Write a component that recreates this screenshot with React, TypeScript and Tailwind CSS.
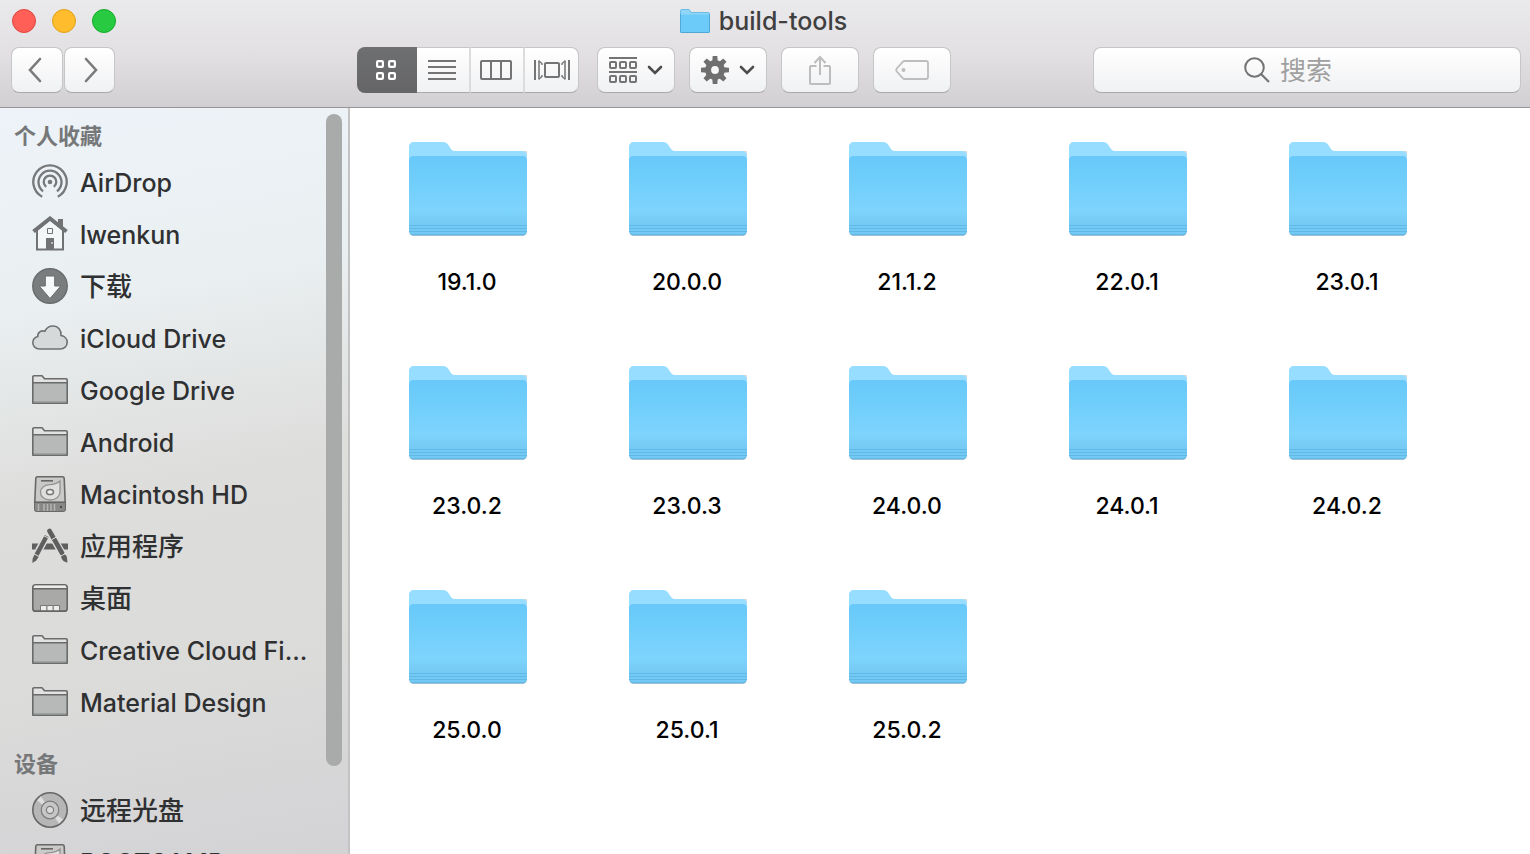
import React from "react";

type IconProps = { className?: string };

/* ---------- Folder artwork ---------- */

function FolderArt({ className }: IconProps) {
  return (
    <svg viewBox="0 0 120 96" className={className} aria-hidden="true">
      <defs>
        <linearGradient id="folderFront" x1="0" y1="0" x2="0" y2="1">
          <stop offset="0" stopColor="#68c8f9" />
          <stop offset="0.15" stopColor="#6bcbfa" />
          <stop offset="0.68" stopColor="#7dd4fd" />
          <stop offset="0.84" stopColor="#75cbf4" />
          <stop offset="1" stopColor="#72c9f3" />
        </linearGradient>
      </defs>
      <path d="M1 88V10h118v80c0 3-2 5-5 5H6c-3 0-5-2-5-7Z" fill="#000" opacity="0.14" />
      <path d="M1 90V6c0-3 2-5 5-5h29c3 0 4 1 6 4l2 3c1 1 2 2 4 2h67c3 0 5 2 5 5v75c0 2-2 4-4 4H5c-2 0-4-2-4-4Z" fill="#97ddff" />
      <path d="M1 90V19c0-2 2-4 4-4h110c2 0 4 2 4 4v71c0 2-2 4-4 4H5c-2 0-4-2-4-4Z" fill="url(#folderFront)" />
      <path d="M1 84.500h118M1 87.500h118M1 90.500h118" stroke="#5fb9e6" strokeWidth="1" />
      <path d="M2 92.500c1 1 2 1.500 3 1.500h110c1 0 2-.5 3-1.500" stroke="#58a8d0" strokeWidth="1" fill="none" />
    </svg>
  );
}

function TitleFolder() {
  return (
    <svg viewBox="0 0 32 26" className="h-[26px] w-8" aria-hidden="true">
      <path d="M1 23V3c0-1 .7-2 2-2h7l2.500 3H29c1.200 0 2 .8 2 2v17.500c0 .9-.6 1.500-1.500 1.500h-27C1.600 25 1 24.400 1 23.500Z" fill="#8fd6f8" />
      <path d="M1 23.500V6.500h30v17c0 .9-.6 1.500-1.500 1.500h-27C1.600 25 1 24.400 1 23.500Z" fill="#6ccbf9" />
      <path d="M1.500 6v17.500c0 .6.4 1 1 1h27c.6 0 1-.4 1-1V6" fill="none" stroke="#4fa8d6" strokeWidth="1" />
      <path d="M1.500 6V3c0-.9.500-1.500 1.500-1.500h6.800l2.400 3H29c.9 0 1.500.6 1.500 1.500" fill="none" stroke="#6bbbe4" strokeWidth="1" />
    </svg>
  );
}

/* ---------- Sidebar icons ---------- */

function AirDropIcon() {
  return (
    <g fill="none" stroke="#76787a" strokeWidth="2.300">
      <path d="M10.200 32.800A16.700 16.700 0 1 1 25.800 32.800" />
      <path d="M11 27.300A11.500 11.500 0 1 1 25 27.300" />
      <path d="M14.200 22.900A6.300 6.300 0 1 1 21.800 22.900" />
      <circle cx="18" cy="18" r="2.300" fill="#76787a" stroke="none" />
    </g>
  );
}

function HomeIcon() {
  return (
    <g>
      <path d="M26 3h5v10l-5-5Z" fill="#707274" />
      <path d="M5 14v19.500h26V14L18 3Z" fill="#f4f7f8" stroke="#707274" strokeWidth="2" />
      <path d="m1.500 15.500 16.500-13 16.500 13" fill="none" stroke="#707274" strokeWidth="4" />
      <path d="M15.500 12.500h5v5h-5Z" fill="none" stroke="#707274" strokeWidth="1" />
      <path d="M14 22h8v11h-8Z" fill="#707274" />
      <path d="M20 26v2" stroke="#fff" strokeWidth="1" />
    </g>
  );
}

function DownloadIcon() {
  return (
    <g>
      <circle cx="18" cy="18" r="17.200" fill="#7a7d7e" stroke="#6a6d6e" strokeWidth="1.500" />
      <path d="M13.300 8h9.400v10h6L18 30.500 7.300 18h6Z" fill="#f6f9fa" stroke="#6a6d6e" strokeWidth="1" />
    </g>
  );
}

function CloudIcon() {
  return (
    <path
      d="M7.500 29C3.500 29 .8 26.200.8 22.800c0-3 2-5.500 5-6.300-.5-3.800 3.500-6.700 7-5.200C14.300 8 17.500 6 21 6c5 0 8.500 4.200 8 9.500 3.500.5 6.200 3.300 6.200 6.800 0 3.800-3 6.700-7 6.700Z"
      fill="#d6d9da"
      stroke="#6f7173"
      strokeWidth="1.600"
    />
  );
}

function SmallFolderIcon() {
  return (
    <g strokeLinejoin="round">
      <path d="M.8 31V4.500L2 3.800h8.500l2.500 3h21.200l1 1V31Z" fill="#e1e2e1" />
      <path d="M.8 11h34.400v20H.8Z" fill="#b7b8b8" />
      <path d="M1 29.500h34" stroke="#a0a1a1" />
      <path d="M.8 10.800h34.400M.8 31.200V5c0-.7.5-1.200 1.200-1.200h8l2.500 3H34c.7 0 1.200.5 1.200 1.200v23.200Z" fill="none" stroke="#6a6b6b" strokeWidth="1.600" />
    </g>
  );
}

function HardDriveIcon() {
  return (
    <g>
      <path d="M5.500.8h25c1 0 1.600.6 1.700 1.600L33.200 26v7c0 1.300-1 2.200-2.200 2.200H5c-1.300 0-2.200-1-2.200-2.200v-7L3.800 2.400C3.900 1.400 4.500.8 5.500.8Z" fill="#c9cac8" stroke="#686967" strokeWidth="1.600" />
      <path d="M3 26.500h30V33c0 1-.8 2-2 2H5c-1.200 0-2-1-2-2Z" fill="#888987" />
      <path d="M3 26.200h30" stroke="#666765" strokeWidth="1.600" />
      <path d="M9 4.800h12" stroke="#666765" strokeWidth="1.600" />
      <path d="M28 5v11c0 4.500-4.500 8-10 8s-9.500-3.200-9.500-7.700S13 8.600 18 8.600c3.500 0 7-1.200 10-3.600Z" fill="#dfe0de" stroke="#92938f" strokeWidth="1.300" />
      <ellipse cx="18" cy="16" rx="3.500" ry="2.600" fill="#eee" stroke="#777876" strokeWidth="1.500" />
      <path d="M6.500 28v7M12 28v7M15.500 28v7M19 28v7M22.500 28v7" stroke="#b4b5b3" strokeWidth="1.500" />
      <path d="M28 30h2v2h-2Z" fill="#4d4e4c" />
    </g>
  );
}

function ApplicationsIcon() {
  return (
    <g fill="none" stroke="#5e5f5e">
      <path d="M0 18.500h36" strokeWidth="6" />
      <path d="M14.500 8 6.500 23M19 6l11.500 20" stroke="#dcdcdb" strokeWidth="7.500" />
      <path d="M14.700 8 4.500 27" strokeWidth="4.400" />
      <path d="m2.700 26-2 4.500L.3 35l3.900-2.500 2.900-4.200Z" fill="#5e5f5e" stroke="none" />
      <path d="M17.500 3 30 25" strokeWidth="4.600" strokeLinecap="round" />
      <path d="M29 27.500c2.500-2.500 6-.8 6 2.500l.5 4.500c-3.500-.3-6.300-3-6.500-7Z" fill="#5e5f5e" stroke="none" />
      <path d="m11.500 7.500 6 3.300M2 25.800l6 3.300M20 11.500l4.500-2.600M27 29.200l6.500-3.700" stroke="#dcdcdb" strokeWidth="1" />
    </g>
  );
}

function DesktopIcon() {
  return (
    <g>
      <rect x=".8" y="4.800" width="34.400" height="26.400" rx="2.800" fill="#a9aaa8" stroke="#666765" strokeWidth="1.600" />
      <path d="M2.500 5.600h31l1 2.400h-33Z" fill="#ececeb" />
      <path d="M1 8.800h34" stroke="#666765" strokeWidth="1.600" />
      <path d="M8.500 31v-5.500h19V31Z" fill="#ededec" stroke="#777876" strokeWidth="1" />
      <path d="M14.800 25.500V31M21.200 25.500V31" stroke="#8c8d8b" strokeWidth="1.500" />
      <path d="M2.500 31.200h31" stroke="#666765" strokeWidth="1.600" />
    </g>
  );
}

function DiscIcon() {
  return (
    <g>
      <circle cx="18" cy="18" r="17.200" fill="#b5b6b5" stroke="#666766" strokeWidth="1.600" />
      <path d="M18 18 5 8.500l4-4.200ZM18 18l13 9.500-4 4.200Z" fill="#dcdddc" />
      <circle cx="18" cy="18" r="8.800" fill="#c5c6c5" stroke="#7b7c7b" strokeWidth="1.200" />
      <circle cx="18" cy="18" r="3.600" fill="#dadad9" stroke="#7b7c7b" strokeWidth="1.200" />
    </g>
  );
}

/* ---------- Toolbar icons ---------- */

function Chevron() {
  return (
    <svg viewBox="0 0 16 10" className="h-2.5 w-4" aria-hidden="true">
      <path d="m2 2 6 6 6-6" fill="none" stroke="#4d4d4d" strokeWidth="2.600" strokeLinecap="round" />
    </svg>
  );
}

function GearIcon() {
  const teeth = [0, 45, 90, 135, 180, 225, 270, 315];
  return (
    <svg viewBox="0 0 28 28" className="size-7" aria-hidden="true">
      {teeth.map((a) => (
        <path key={a} d="M11.200 6 11.700 0h4.600l.5 6Z" fill="#6f6f6f" transform={`rotate(${a} 14 14)`} />
      ))}
      <circle cx="14" cy="14" r="6.900" fill="none" stroke="#6f6f6f" strokeWidth="6" />
    </svg>
  );
}

/* ---------- Data ---------- */

type SidebarItem = { label: string; icon: React.ReactNode; chinese?: boolean };

const favorites: SidebarItem[] = [
  { label: "AirDrop", icon: <AirDropIcon /> },
  { label: "lwenkun", icon: <HomeIcon /> },
  { label: "下载", icon: <DownloadIcon />, chinese: true },
  { label: "iCloud Drive", icon: <CloudIcon /> },
  { label: "Google Drive", icon: <SmallFolderIcon /> },
  { label: "Android", icon: <SmallFolderIcon /> },
  { label: "Macintosh HD", icon: <HardDriveIcon /> },
  { label: "应用程序", icon: <ApplicationsIcon />, chinese: true },
  { label: "桌面", icon: <DesktopIcon />, chinese: true },
  { label: "Creative Cloud Fi...", icon: <SmallFolderIcon /> },
  { label: "Material Design", icon: <SmallFolderIcon /> },
];

const devices: SidebarItem[] = [
  { label: "远程光盘", icon: <DiscIcon />, chinese: true },
  { label: "BOOTCAMP", icon: <HardDriveIcon /> },
];

const folders = [
  "19.1.0", "20.0.0", "21.1.2", "22.0.1", "23.0.1",
  "23.0.2", "23.0.3", "24.0.0", "24.0.1", "24.0.2",
  "25.0.0", "25.0.1", "25.0.2",
];

/* ---------- Pieces ---------- */

const raised =
  "flex h-[46px] items-center justify-center rounded-lg border border-[#c6c5c7] border-b-[#a9a9ab] bg-linear-to-b from-white to-[#f0f1f3]";

function SidebarSection({ title, items }: { title: string; items: SidebarItem[] }) {
  return (
    <section className="mb-4">
      <h2 className="flex h-10 items-center pl-3.5 text-[22px] font-bold text-[#757779]">{title}</h2>
      <ul>
        {items.map((item) => (
          <li key={item.label}>
            <a href="#" className="flex h-[52px] items-center gap-3 pl-8">
              <svg viewBox="0 0 36 36" className="size-9 shrink-0" aria-hidden="true">
                {item.icon}
              </svg>
              <span
                className={`${item.chinese ? "text-[26px]" : "text-[25px]"} pt-0.5 leading-8 font-medium whitespace-nowrap text-[#2f3031]`}
              >
                {item.label}
              </span>
            </a>
          </li>
        ))}
      </ul>
    </section>
  );
}

function Toolbar() {
  return (
    <div className="flex items-center pr-[9px] pl-[11px]">
      <nav className="flex shrink-0 gap-px">
        <button aria-label="后退" className={`${raised} w-[52px]`}>
          <svg viewBox="0 0 16 26" className="mr-1 h-[26px] w-4" aria-hidden="true">
            <path d="M13 2 3 13l10 11" fill="none" stroke="#7b7b7b" strokeWidth="2.600" strokeLinecap="round" />
          </svg>
        </button>
        <button aria-label="前进" className={`${raised} w-[51px]`}>
          <svg viewBox="0 0 16 26" className="ml-0.5 h-[26px] w-4" aria-hidden="true">
            <path d="m3 2 10 11L3 24" fill="none" stroke="#7b7b7b" strokeWidth="2.600" strokeLinecap="round" />
          </svg>
        </button>
      </nav>

      <div className="ml-[242px] flex shrink-0">
        <button aria-label="图标" aria-pressed="true" className="flex h-[46px] w-[60px] items-center justify-center rounded-l-lg bg-linear-to-b from-[#6e6f71] to-[#656567]">
          <svg viewBox="0 0 20 20" className="mr-0.5 size-5" fill="none" stroke="#fff" strokeWidth="2.200" aria-hidden="true">
            <rect x="1.100" y="1.100" width="5.800" height="5.800" rx="1" />
            <rect x="13.100" y="1.100" width="5.800" height="5.800" rx="1" />
            <rect x="1.100" y="13.100" width="5.800" height="5.800" rx="1" />
            <rect x="13.100" y="13.100" width="5.800" height="5.800" rx="1" />
          </svg>
        </button>
        <button aria-label="列表" className={`${raised} w-[54px] rounded-none border-r-2 border-l-0 border-r-[#dcdcdd]`}>
          <svg viewBox="0 0 28 20" className="mr-0.5 h-5 w-7" aria-hidden="true">
            <path d="M0 1h28M0 7h28M0 13h28M0 19h28" stroke="#747474" strokeWidth="2" />
          </svg>
        </button>
        <button aria-label="分栏" className={`${raised} w-[54px] rounded-none border-r-2 border-l-0 border-r-[#dcdcdd]`}>
          <svg viewBox="0 0 32 20" className="mr-0.5 h-5 w-8" fill="none" stroke="#747474" strokeWidth="2" aria-hidden="true">
            <rect x="1" y="1" width="30" height="18" rx="1" />
            <path d="M11 1v18M21 1v18" />
          </svg>
        </button>
        <button aria-label="封面流" className={`${raised} w-[54px] rounded-l-none border-l-0`}>
          <svg viewBox="0 0 36 20" className="h-5 w-9" fill="none" stroke="#747474" aria-hidden="true">
            <path d="M1 0v20M35 0v20" strokeWidth="2" />
            <path d="M5 .5v19M31 .5v19" strokeWidth="1.500" />
            <path d="M5 1l3 2.500v1.500M5 19l3-2.500V15M31 1l-3 2.500v1.500M31 19l-3-2.500V15" strokeWidth="1.400" />
            <rect x="11" y="3" width="14" height="14" rx="1" strokeWidth="2" />
          </svg>
        </button>
      </div>

      <div className="ml-[18px] flex shrink-0 gap-3.5">
        <button aria-label="排列" className={`${raised} w-[78px] gap-2.5`}>
          <svg viewBox="0 0 28 26" className="h-[26px] w-7" fill="none" stroke="#747474" strokeWidth="2" aria-hidden="true">
            <path d="M0 1h28M0 15h28" />
            {[1, 11, 21].map((x) => (
              <g key={x}>
                <rect x={x} y="5" width="6" height="6" rx="1" />
                <rect x={x} y="19" width="6" height="6" rx="1" />
              </g>
            ))}
          </svg>
          <Chevron />
        </button>
        <button aria-label="操作" className={`${raised} w-[78px] gap-2.5`}>
          <GearIcon />
          <Chevron />
        </button>
        <button aria-label="共享" className={`${raised} w-[78px]`}>
          <svg viewBox="0 0 22 30" className="h-[30px] w-[22px]" fill="none" stroke="#bdbdbd" strokeWidth="2" aria-hidden="true">
            <path d="M7.500 11H2c-.6 0-1 .4-1 1v16c0 .6.4 1 1 1h18c.6 0 1-.4 1-1V12c0-.6-.4-1-1-1h-5.500M11 20V2M5.500 8 11 2l5.500 6" />
          </svg>
        </button>
        <button aria-label="标签" className={`${raised} w-[78px]`}>
          <svg viewBox="0 0 34 20" className="h-5 w-[34px]" fill="none" stroke="#bdbdbd" strokeWidth="1.800" aria-hidden="true">
            <path d="M10 1h21c1.200 0 2 .8 2 2v14c0 1.200-.8 2-2 2H10c-1 0-1.800-.4-2.500-1.200L1.800 11.500c-.8-1-.8-2 0-3L7.500 2.200C8.200 1.400 9 1 10 1Z" />
            <circle cx="8.500" cy="10" r="2" fill="#bdbdbd" stroke="none" />
          </svg>
        </button>
      </div>

      <label className={`${raised} ml-[142px] min-w-0 flex-1 gap-2.5 pl-[150px]`}>
        <svg viewBox="0 0 26 26" className="size-[26px] shrink-0" fill="none" stroke="#737373" strokeWidth="2" aria-hidden="true">
          <circle cx="10.500" cy="10.500" r="9.300" />
          <path d="m17 17 8 8" strokeWidth="2.200" />
        </svg>
        <input type="search" aria-label="搜索" placeholder="搜索" className="min-w-0 flex-1 bg-transparent pt-0.5 text-[26px] leading-8 text-[#333] outline-none placeholder:text-[#a0a0a0]" />
      </label>
    </div>
  );
}

export default function App() {
  return (
    <div className="flex h-screen flex-col overflow-hidden bg-white font-['Inter','Noto_Sans_CJK_SC',sans-serif]">
      <header className="flex shrink-0 flex-col gap-1.5 border-b border-[#969597] bg-linear-to-b from-[#eae9eb] via-[#e2e0e3] to-[#d1cfd2] pb-3.5">
        <div className="grid h-[41px] grid-cols-[1fr_auto_1fr] items-center">
          <div className="flex gap-4 pl-3">
            <button aria-label="关闭" className="size-6 rounded-full border border-[#e2463f] bg-[#ff5f57]" />
            <button aria-label="最小化" className="size-6 rounded-full border border-[#e1a116] bg-[#ffbd2e]" />
            <button aria-label="缩放" className="size-6 rounded-full border border-[#12ac28] bg-[#28ca41]" />
          </div>
          <div className="flex items-center gap-2 pr-1">
            <TitleFolder />
            <h1 className="text-[25px] leading-8 font-medium text-[#3f3f40]">build-tools</h1>
          </div>
        </div>
        <Toolbar />
      </header>

      <div className="flex min-h-0 flex-1">
        <aside className="relative w-[350px] shrink-0 overflow-hidden border-r-2 border-[#c3c3c4] bg-linear-[170deg,#edf3f8_0%,#eaeff1_25%,#dddddb_50%,#dbdbda_75%,#d3d2d5_100%] pt-2">
          <SidebarSection title="个人收藏" items={favorites} />
          <SidebarSection title="设备" items={devices} />
          <div className="absolute top-1.5 right-1.5 h-[652px] w-4 rounded-full bg-[#a9aaaa]" />
        </aside>

        <main className="min-w-0 flex-1 overflow-hidden pl-2">
          <ul className="grid grid-cols-[repeat(auto-fill,220px)] pt-[33px]">
            {folders.map((name) => (
              <li key={name} className="h-56">
                <a href="#" className="flex flex-col items-center gap-[29px]">
                  <FolderArt className="h-24 w-[120px]" />
                  <span className="pr-0.5 text-[23px] leading-8 font-medium text-black">{name}</span>
                </a>
              </li>
            ))}
          </ul>
        </main>
      </div>
    </div>
  );
}
